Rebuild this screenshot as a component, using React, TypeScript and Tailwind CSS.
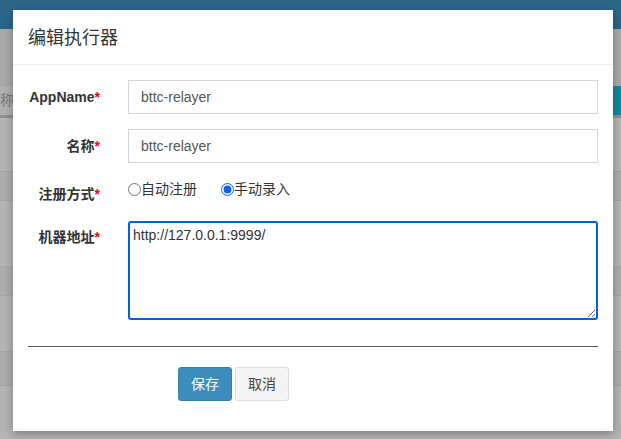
import React from "react";

const font = { fontFamily: '"Liberation Sans", "Noto Sans CJK SC", sans-serif' };

function Label({ text, className = "" }: { text: string; className?: string }) {
  return (
    <label className={"block w-[72px] shrink-0 text-right text-[14px] font-bold leading-[20px] text-[#333] " + className}>
      {text}
      <span className="text-[#e00]">*</span>
    </label>
  );
}

export default function App() {
  return (
    <div className="relative h-[439px] w-[621px] overflow-hidden bg-[#a9a9aa]" style={font}>
      {/* page behind the overlay */}
      <div className="h-[29px] bg-[#2b6689]" />
      <div className="flex flex-col">
        <div className="h-[57px] bg-[#a9a9ab]" />
        <div className="flex h-[32px] items-center justify-between border-b-[3px] border-[#8f8f90] bg-[#b0b0b0]">
          <span className="text-[14px] text-[#777]">称</span>
          <div className="h-full w-[20px] bg-[#13899f]" />
        </div>
        <div className="h-[54px] border-b border-[#a6a6a6] bg-[#b5b5b5]" />
        <div className="h-[29px] border-b border-[#a6a6a6] bg-[#adadad]" />
        <div className="h-[66px] border-b border-[#a6a6a6] bg-[#b5b5b5]" />
        <div className="h-[29px] border-b border-[#a6a6a6] bg-[#adadad]" />
        <div className="h-[56px] border-b border-[#a6a6a6] bg-[#b5b5b5]" />
        <div className="h-[34px] border-b border-[#a6a6a6] bg-[#adadad]" />
        <div className="h-[60px] bg-[#b5b5b5]" />
      </div>

      {/* modal */}
      <div className="absolute left-[13px] top-[10px] flex h-[421px] w-[600px] flex-col bg-white shadow-[0_3px_9px_rgba(0,0,0,0.3)]">
        <div className="flex h-[55px] items-center border-b border-[#eeeeee] px-[15px] pt-[1px]">
          <h4 className="text-[18px] leading-none text-[#333]">编辑执行器</h4>
        </div>

        <div className="flex flex-col px-[15px] pt-[15px]">
          <div className="flex items-center gap-[28px]">
            <Label text="AppName" />
            <input
              readOnly
              value="bttc-relayer"
              className="h-[34px] flex-1 border border-[#d2d6de] px-[12px] text-[14px] text-[#555] outline-none"
            />
          </div>
          <div className="mt-[15px] flex items-center gap-[28px]">
            <Label text="名称" />
            <input
              readOnly
              value="bttc-relayer"
              className="h-[34px] flex-1 border border-[#d2d6de] px-[12px] text-[14px] text-[#555] outline-none"
            />
          </div>
          <div className="mt-[14px] flex h-[44px] items-start gap-[28px]">
            <Label text="注册方式" className="mt-[7px]" />
            <div className="flex items-center gap-[24px] pt-[2px] text-[14px] leading-[20px] text-[#333]">
              <label className="flex items-center">
                <input type="radio" name="t" className="m-0 h-[13px] w-[13px]" />
                自动注册
              </label>
              <label className="flex items-center">
                <input type="radio" name="t" defaultChecked className="m-0 h-[13px] w-[13px] accent-[#0a64e0]" />
                手动录入
              </label>
            </div>
          </div>
          <div className="flex items-start gap-[28px]">
            <Label text="机器地址" className="mt-[6px]" />
            <textarea
              readOnly
              value="http://127.0.0.1:9999/"
              className="h-[99px] flex-1 rounded-[3px] border-2 border-[#0a60d2] px-[3px] py-[3px] text-[14px] leading-[18px] text-[#333] outline-none"
            />
          </div>
          <div className="mt-[26px] border-t border-[#555]" />
          <div className="mt-[20px] flex gap-[3px] pl-[150px]">
            <button className="h-[34px] w-[54px] rounded-[3px] border border-[#367fa9] bg-[#3c8dbc] text-[14px] text-white">
              保存
            </button>
            <button className="h-[34px] w-[54px] rounded-[3px] border border-[#ddd] bg-[#f4f4f4] text-[14px] text-[#444]">
              取消
            </button>
          </div>
        </div>
      </div>
    </div>
  );
}
